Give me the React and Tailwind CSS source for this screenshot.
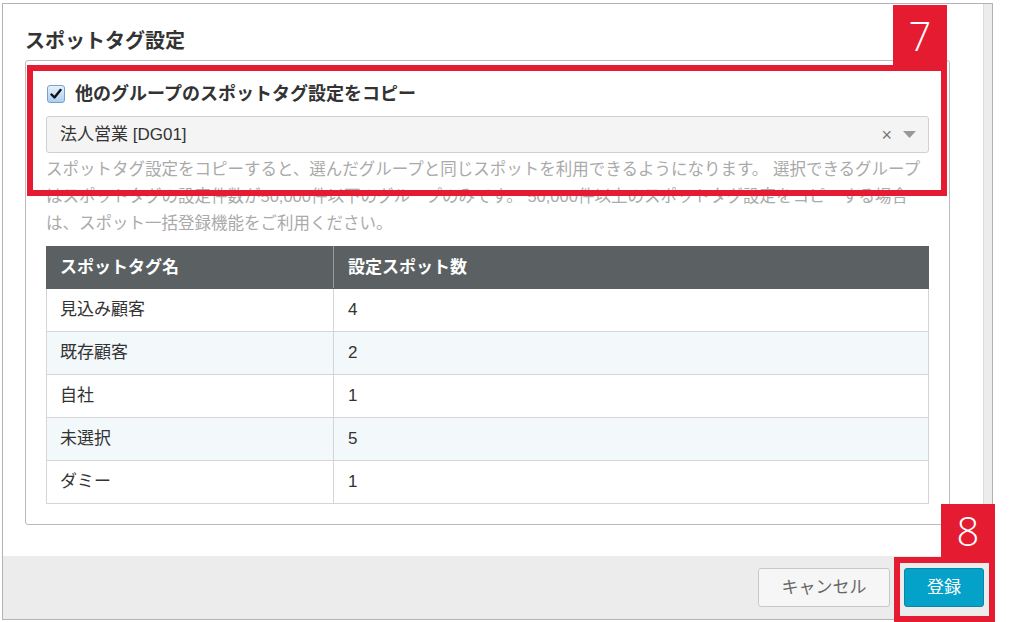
import React from 'react';

const rows = [
  { name: '見込み顧客', count: 4 },
  { name: '既存顧客', count: 2 },
  { name: '自社', count: 1 },
  { name: '未選択', count: 5 },
  { name: 'ダミー', count: 1 },
];

const font = { fontFamily: '"Liberation Sans", "Noto Sans CJK JP", sans-serif' };

const App = () => {
  return (
    <div className="relative w-[1011px] h-[622px] overflow-hidden bg-white pt-[3px] pl-[2px] text-[#333]" style={font}>
      {/* modal */}
      <div className="w-[991px] h-[617px] border border-[#b3b3b3] flex flex-col">
        <div className="flex h-[552px]">
          <div className="flex-1 pl-[22px]">
            <h2 className="pt-[23px] text-[20px] leading-[28px] font-bold text-[#333]">スポットタグ設定</h2>
            <div className="mt-[5px] w-[925px] border border-[#bbb] rounded-[3px] px-[20px] pb-[20px]">
              <label className="flex items-center pt-[20px] h-[46px]">
                <span className="ml-px w-[18px] h-[18px] rounded-[3px] border border-[#7e9fc4] bg-gradient-to-b from-[#e4f1fc] to-[#a9d0f2] flex items-center justify-center">
                  <svg width="12" height="12" viewBox="0 0 12 12">
                    <path d="M1.5 6.5 L4.5 9.5 L10.5 2" fill="none" stroke="#111" strokeWidth="2.4" strokeLinecap="round" strokeLinejoin="round" />
                  </svg>
                </span>
                <span className="ml-[10px] text-[18px] leading-[26px] font-bold">他のグループのスポットタグ設定をコピー</span>
              </label>
              <div className="mt-[9px] h-[37px] border border-[#d0d0d0] rounded-[3px] bg-[#f4f4f4] flex items-center pl-[13px] pr-[12px]">
                <span className="flex-1 text-[17px] text-[#333]">法人営業 [DG01]</span>
                <span className="text-[#777] text-[18px] leading-none mr-[11px]">×</span>
                <svg width="13" height="8" viewBox="0 0 13 8">
                  <path d="M0 0 H13 L6.5 7 Z" fill="#999" />
                </svg>
              </div>
              <p className="mt-[3px] text-[16.5px] leading-[27px] text-[#aaa] whitespace-nowrap">
                スポットタグ設定をコピーすると、選んだグループと同じスポットを利用できるようになります。 選択できるグループ
                <br />
                はスポットタグの設定件数が50,000件以下のグループのみです。 50,000件以上のスポットタグ設定をコピーする場合
                <br />
                は、スポット一括登録機能をご利用ください。
              </p>
              <table className="mt-[9px] w-full border-collapse text-[17px]">
                <thead>
                  <tr className="bg-[#5b6163] text-white h-[42px]">
                    <th className="w-[287px] text-left font-bold pl-[13px] border border-[#5b6163] border-r-[#9a9a9a]">スポットタグ名</th>
                    <th className="text-left font-bold pl-[14px] border border-[#5b6163]">設定スポット数</th>
                  </tr>
                </thead>
                <tbody>
                  {rows.map((row, i) => (
                    <tr key={row.name} className={`h-[43px] ${i % 2 === 1 ? 'bg-[#f3f8fb]' : 'bg-white'}`}>
                      <td className="pl-[13px] border border-[#d5d5d5]">{row.name}</td>
                      <td className="pl-[14px] border border-[#d5d5d5]">{row.count}</td>
                    </tr>
                  ))}
                </tbody>
              </table>
            </div>
          </div>
          {/* scrollbar track */}
          <div className="w-[9px] bg-[#ececec] border-l border-[#dcdcdc]"></div>
        </div>
        <div className="h-[63px] bg-[#ececec] flex items-center justify-end pr-[8px] gap-[14px]">
          <button className="w-[132px] h-[39px] rounded-[3px] border border-[#c8c8c8] bg-[#f6f6f6] text-[17px] text-[#666]">キャンセル</button>
          <button className="w-[80px] h-[39px] rounded-[3px] border border-[#0a86a8] bg-[#04a2c8] text-[17px] text-white">登録</button>
        </div>
      </div>

      {/* annotation 7 */}
      <div className="absolute left-[27px] top-[65px] w-[920px] h-[131px] border-[6px] border-[#e41b31]"></div>
      <div className="absolute left-[893px] top-[5px] w-[54px] h-[61px] bg-[#e41b31] flex items-center justify-center text-white text-[40px] font-light leading-none" style={{ fontFamily: '"Open Sans", sans-serif' }}>7</div>

      {/* annotation 8 */}
      <div className="absolute left-[894px] top-[557px] w-[101px] h-[65px] border-[6px] border-[#e41b31]"></div>
      <div className="absolute left-[941px] top-[504px] w-[54px] h-[54px] bg-[#e41b31] flex items-center justify-center text-white text-[40px] font-light leading-none" style={{ fontFamily: '"Open Sans", sans-serif' }}>8</div>
    </div>
  );
};

export default App;
